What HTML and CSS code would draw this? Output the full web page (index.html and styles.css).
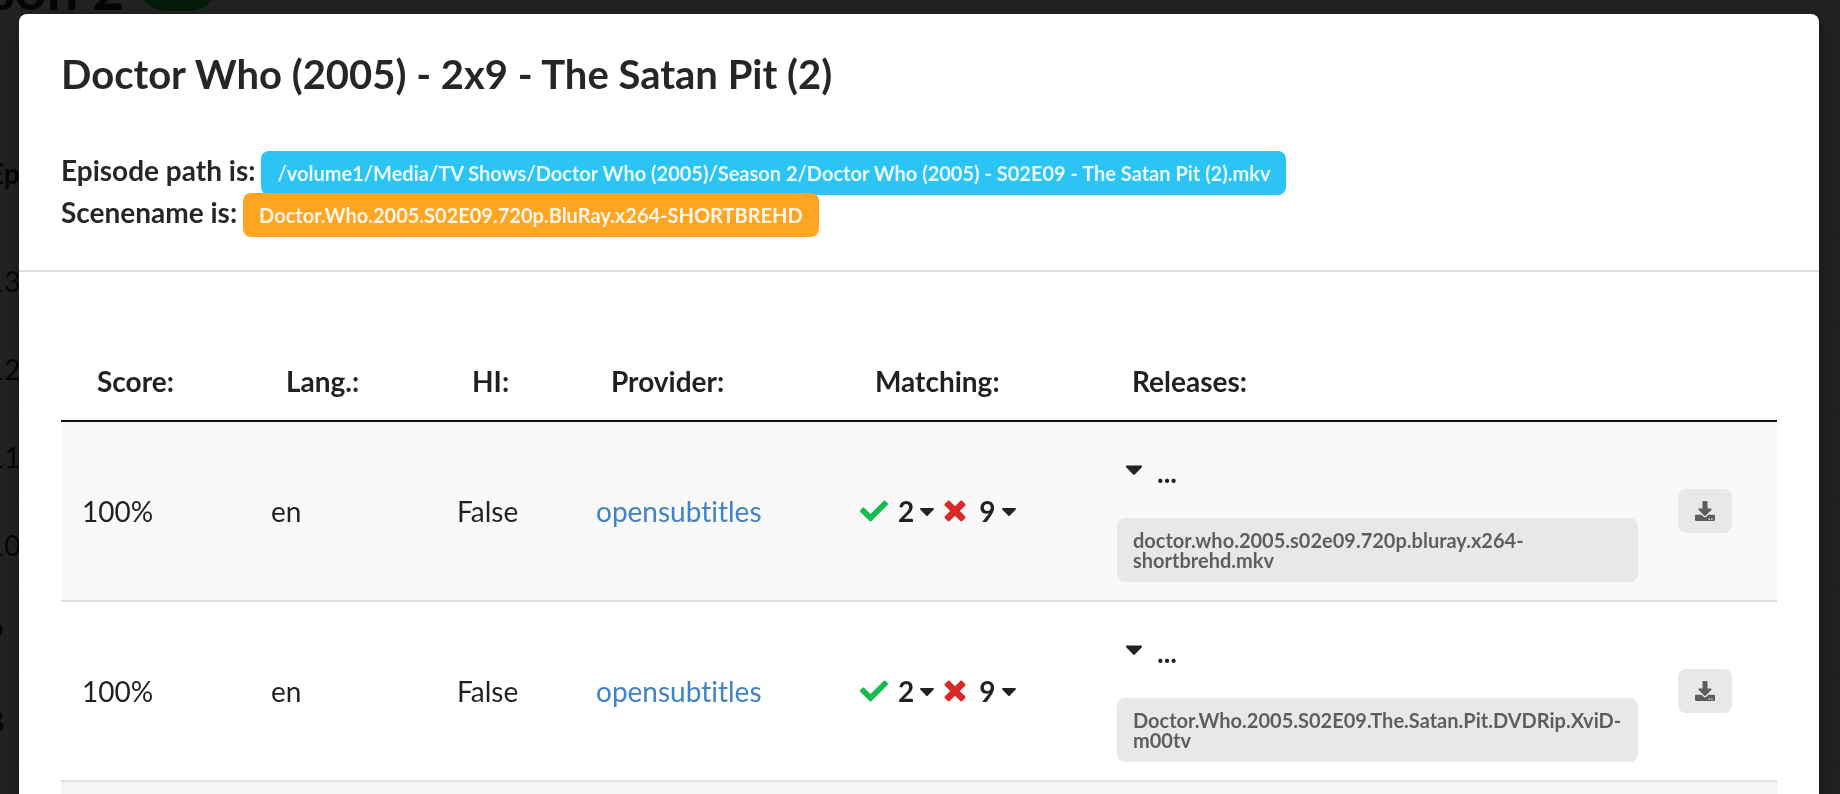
FILE: index.html
```html
<!DOCTYPE html>
<html lang="en">
<head>
  <meta charset="UTF-8">
  <meta name="viewport" content="width=device-width, initial-scale=1.0">
  <title>Doctor Who (2005) - Bazarr</title>
  <link rel="stylesheet" href="styles.css">
</head>
<body>
  <!-- Icons used in the rows -->
  <svg class="sprite" aria-hidden="true">
    <symbol id="icon-check" viewBox="0 0 512 512">
      <path d="M173.898 439.404l-166.4-166.4c-9.997-9.997-9.997-26.206 0-36.204l36.203-36.204c9.997-9.998 26.207-9.998 36.204 0L192 312.69 432.095 72.596c9.997-9.997 26.207-9.997 36.204 0l36.203 36.204c9.997 9.997 9.997 26.206 0 36.204l-294.4 294.401c-9.998 9.997-26.207 9.997-36.204-.001z"/>
    </symbol>
    <symbol id="icon-times" viewBox="0 0 384 512">
      <path d="M323.1 441l53.9-53.9c9.4-9.4 9.4-24.5 0-33.9L279.8 256l97.2-97.2c9.4-9.4 9.4-24.5 0-33.9L323.1 71c-9.4-9.4-24.5-9.4-33.9 0L192 168.2 94.8 71c-9.4-9.4-24.5-9.4-33.9 0L7 124.9c-9.4 9.4-9.4 24.5 0 33.9l97.2 97.2L7 353.2c-9.4 9.4-9.4 24.5 0 33.9L60.9 441c9.4 9.4 24.5 9.4 33.9 0l97.2-97.2 97.2 97.2c9.3 9.3 24.5 9.3 33.9 0z"/>
    </symbol>
    <symbol id="icon-caret" viewBox="0 0 320 512">
      <path d="M31.3 192h257.3c17.8 0 26.7 21.5 14.1 34.1L174.1 354.8c-7.8 7.8-20.5 7.8-28.3 0L17.2 226.1C4.6 213.5 13.5 192 31.3 192z"/>
    </symbol>
    <symbol id="icon-download" viewBox="0 0 512 512">
      <path d="M216 0h80c13.3 0 24 10.7 24 24v168h87.7c17.8 0 26.7 21.5 14.1 34.1L269.7 378.3c-7.5 7.5-19.8 7.5-27.3 0L90.1 226.1c-12.6-12.6-3.7-34.1 14.1-34.1H192V24c0-13.3 10.7-24 24-24zm296 376v112c0 13.3-10.7 24-24 24H24c-13.3 0-24-10.7-24-24V376c0-13.3 10.7-24 24-24h146.7l49 49c20.1 20.1 52.5 20.1 72.6 0l49-49H488c13.3 0 24 10.7 24 24zm-124 88c0-11-9-20-20-20s-20 9-20 20 9 20 20 20 20-9 20-20zm64 0c0-11-9-20-20-20s-20 9-20 20 9 20 20 20 20-9 20-20z"/>
    </symbol>
  </svg>

  <!-- Series page behind the dimmer -->
  <div class="page" aria-hidden="true">
    <div class="season-title">Season 2 <span class="season-count"></span></div>
    <table class="episodes">
      <thead>
        <tr><th>Ep</th></tr>
      </thead>
      <tbody>
        <tr><td>13</td></tr>
        <tr><td>12</td></tr>
        <tr><td>11</td></tr>
        <tr><td>10</td></tr>
        <tr><td>9</td></tr>
        <tr><td>8</td></tr>
        <tr><td></td></tr>
      </tbody>
    </table>
  </div>

  <div class="dimmer">
    <div class="modal" role="dialog" aria-labelledby="modal-title">
      <div class="header">
        <h1 id="modal-title">Doctor Who (2005) - 2x9 - The Satan Pit (2)</h1>
        <div class="info">Episode path is: <span class="label blue">/volume1/Media/TV Shows/Doctor Who (2005)/Season 2/Doctor Who (2005) - S02E09 - The Satan Pit (2).mkv</span></div>
        <div class="info">Scenename is: <span class="label orange">Doctor.Who.2005.S02E09.720p.BluRay.x264-SHORTBREHD</span></div>
      </div>
      <div class="content">
        <table class="results">
          <colgroup>
            <col class="col-score">
            <col class="col-lang">
            <col class="col-hi">
            <col class="col-provider">
            <col class="col-matching">
            <col>
            <col class="col-action">
          </colgroup>
          <thead>
            <tr>
              <th>Score:</th>
              <th>Lang.:</th>
              <th>HI:</th>
              <th>Provider:</th>
              <th>Matching:</th>
              <th>Releases:</th>
              <th></th>
            </tr>
          </thead>
          <tbody>
            <tr>
              <td>100%</td>
              <td>en</td>
              <td>False</td>
              <td><a href="#">opensubtitles</a></td>
              <td>
                <div class="matching">
                  <svg class="icon green"><use href="#icon-check"/></svg>
                  <button type="button" class="dropdown">2<svg class="caret"><use href="#icon-caret"/></svg></button>
                  <svg class="icon red"><use href="#icon-times"/></svg>
                  <button type="button" class="dropdown">9<svg class="caret"><use href="#icon-caret"/></svg></button>
                </div>
              </td>
              <td>
                <button type="button" class="accordion"><svg class="caret"><use href="#icon-caret"/></svg>...</button>
                <div class="label release">doctor.who.2005.s02e09.720p.bluray.x264-shortbrehd.mkv</div>
              </td>
              <td class="action"><button type="button" class="download" aria-label="Download"><svg><use href="#icon-download"/></svg></button></td>
            </tr>
            <tr>
              <td>100%</td>
              <td>en</td>
              <td>False</td>
              <td><a href="#">opensubtitles</a></td>
              <td>
                <div class="matching">
                  <svg class="icon green"><use href="#icon-check"/></svg>
                  <button type="button" class="dropdown">2<svg class="caret"><use href="#icon-caret"/></svg></button>
                  <svg class="icon red"><use href="#icon-times"/></svg>
                  <button type="button" class="dropdown">9<svg class="caret"><use href="#icon-caret"/></svg></button>
                </div>
              </td>
              <td>
                <button type="button" class="accordion"><svg class="caret"><use href="#icon-caret"/></svg>...</button>
                <div class="label release">Doctor.Who.2005.S02E09.The.Satan.Pit.DVDRip.XviD-m00tv</div>
              </td>
              <td class="action"><button type="button" class="download" aria-label="Download"><svg><use href="#icon-download"/></svg></button></td>
            </tr>
            <tr class="active">
              <td colspan="7"></td>
            </tr>
          </tbody>
        </table>
      </div>
    </div>
  </div>
</body>
</html>
```

FILE: styles.css
```css
* {
  box-sizing: border-box;
}

body {
  margin: 0;
  height: 100vh;
  overflow: hidden;
  background: #e3e3e3;
  color: rgba(0, 0, 0, 0.87);
  font-family: Lato, "Liberation Sans", sans-serif;
  font-size: 28px;
  font-variant-ligatures: none;
  line-height: 34px;
}

button {
  padding: 0;
  border: none;
  background: none;
  color: inherit;
  font: inherit;
  font-weight: bold;
  cursor: pointer;
}

svg {
  fill: currentColor;
}

.sprite {
  position: absolute;
  width: 0;
  height: 0;
}

/* page behind, scrolled down to the season */
.page {
  height: 100vh;
  margin: -45px -33px 0 -99px;
}

.season-title {
  display: flex;
  align-items: flex-end;
  gap: 14px;
  height: 68px;
  font-size: 56px;
  font-weight: bold;
  line-height: 68px;
}

.season-count {
  width: 80px;
  height: 56px;
  margin-bottom: 12px;
  border-radius: 28px;
  background: #21ba45;
}

.episodes {
  width: 100%;
  margin-top: 86px;
  padding-left: 66px;
  border-spacing: 0;
  text-align: left;
}

.episodes th,
.episodes td {
  height: 88px;
  padding: 0 21px;
  border-bottom: 2px solid #c8c8c8;
}

.episodes th {
  height: 129px;
}

/* modal */
.dimmer {
  position: fixed;
  inset: 0;
  overflow: hidden;
  padding: 14px 21px 0 19px;
  background: rgba(0, 0, 0, 0.85);
}

.modal {
  min-height: 100vh;
  border-radius: 8px;
  background: #fff;
  box-shadow: 2px 6px 6px rgba(0, 0, 0, 0.2), 2px 6px 30px 4px rgba(0, 0, 0, 0.2);
}

.header {
  padding: 35px 42px 37px;
  border-bottom: 2px solid #dedede;
  color: rgba(0, 0, 0, 0.85);
  font-weight: bold;
}

.header h1 {
  margin: 0 0 50px;
  font-size: 40px;
  line-height: 50px;
}

.info {
  display: flex;
  align-items: baseline;
  gap: 6px;
  height: 42px;
  line-height: 42px;
}

.label {
  padding: 12px 16px;
  border-radius: 8px;
  font-size: 20px;
  font-weight: bold;
  line-height: 20px;
}

.blue {
  background: #2bc4f5;
  color: rgba(255, 255, 255, 0.9);
}

.orange {
  background: #ffa522;
  color: rgba(255, 255, 255, 0.9);
}

.content {
  padding: 70px 42px 42px;
}

.results {
  width: 100%;
  table-layout: fixed;
  border-spacing: 0;
  text-align: left;
}

.col-score {
  width: 189px;
}

.col-lang {
  width: 186px;
}

.col-hi {
  width: 139px;
}

.col-provider {
  width: 264px;
}

.col-matching {
  width: 257px;
}

.col-action {
  width: 118px;
}

.results th {
  padding: 22px 0 22px 36px;
  border-bottom: 2px solid #111;
}

.results td {
  padding: 18px 21px;
  border-bottom: 2px solid #dedede;
}

.results tbody tr:nth-child(odd) {
  background: #f9f9f9;
}

.results tbody tr.active {
  background: #f5f5f5;
}

.results a {
  color: #4183c4;
  text-decoration: none;
}

.matching {
  display: flex;
  align-items: center;
}

.icon {
  width: 28px;
  height: 28px;
}

.green {
  color: #15bb4b;
}

.red {
  color: #db2828;
}

.dropdown {
  display: flex;
  align-items: center;
  gap: 5px;
  margin: 0 6px 0 10px;
}

.dropdown .caret {
  width: 16px;
  height: 24px;
}

.accordion {
  display: flex;
  align-items: flex-start;
  gap: 14px;
  margin: 15px 0 29px 8px;
}

.accordion .caret {
  width: 18px;
  height: 28px;
}

.release {
  background: #e8e8e8;
  color: rgba(0, 0, 0, 0.6);
}

.results .action {
  padding: 0 19px;
}

.download {
  display: flex;
  align-items: center;
  justify-content: center;
  width: 54px;
  height: 44px;
  border-radius: 8px;
  background: #e8e8e8;
  color: rgba(0, 0, 0, 0.6);
}

.download svg {
  width: 20px;
  height: 20px;
}
```
